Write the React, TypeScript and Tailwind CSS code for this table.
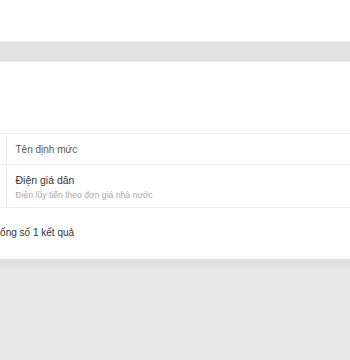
import React from 'react';

type Tariff = {
  name: string;
  description: string;
};

const tariffs: Tariff[] = [
  { name: 'Điện giá dân', description: 'Điện lũy tiến theo đơn giá nhà nước' },
];

export default function App() {
  return (
    <div className="flex h-[360px] w-[350px] flex-col overflow-hidden bg-white font-['Liberation_Sans',Arial,sans-serif]">
      {/* Toolbar strip */}
      <div className="mt-[41px] h-[21px] border-y border-[#ececec] bg-[#e1e1e1]" />

      <div className="h-[71px]" />

      {/* Tariff table */}
      <div className="-ml-[40px] w-[400px]">
        <table className="w-full border-collapse text-left">
          <thead>
            <tr className="border-y border-[#ededed]">
              <th className="w-[46px] border-r border-[#ededed]" />
              <th className="h-[31px] px-[9px] text-[10px] font-normal text-[#555]">Tên định mức</th>
            </tr>
          </thead>
          <tbody>
            {tariffs.map((t) => (
              <tr key={t.name} className="border-b border-[#ededed]">
                <td className="border-r border-[#ededed]" />
                <td className="h-[43px] px-[9px] align-top pt-[9px]">
                  <div className="text-[10.5px] leading-[13px] text-[#333]">{t.name}</div>
                  <div className="mt-[3px] text-[8.6px] leading-[10px] text-[#aaa]">{t.description}</div>
                </td>
              </tr>
            ))}
          </tbody>
        </table>
        <div className="ml-[34px] pt-[19px] text-[10px] leading-[12px] text-[#333]">Tổng số {tariffs.length} kết quả</div>
      </div>

      {/* Footer area */}
      <div className="mt-auto h-[101px] bg-gradient-to-b from-[#dedede] to-[#e8e8e8] to-[14px]" />
    </div>
  );
}
